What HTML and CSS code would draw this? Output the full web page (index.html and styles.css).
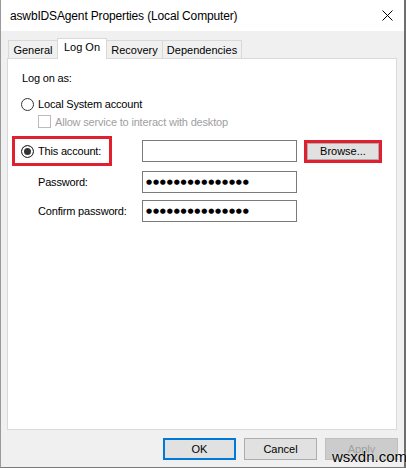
FILE: index.html
```html
<!DOCTYPE html>
<html lang="en">
<head>
  <meta charset="UTF-8" />
  <meta name="viewport" content="width=device-width, initial-scale=1.0"/>
  <title>aswbIDSAgent Properties (Local Computer)</title>
  <link rel="stylesheet" href="styles.css">
</head>
<body>
  <div class="window">
    <div class="titlebar">
      <span class="title">aswbIDSAgent Properties (Local Computer)</span>
      <svg class="close" width="11" height="11" viewBox="0 0 11 11">
        <path d="M0.5 0.5 L10.5 10.5 M10.5 0.5 L0.5 10.5" stroke="#000" stroke-width="1" fill="none"/>
      </svg>
    </div>

    <div class="tabs">
      <div class="tab w-general">General</div>
      <div class="tab active w-logon">Log On</div>
      <div class="tab w-recovery">Recovery</div>
      <div class="tab w-deps">Dependencies</div>
    </div>

    <div class="panel">
      <div class="caption">Log on as:</div>

      <div class="row option">
        <span class="radio"></span>
        <span>Local System account</span>
      </div>
      <div class="row sub disabled">
        <span class="check"></span>
        <span>Allow service to interact with desktop</span>
      </div>

      <div class="row account">
        <div class="account-label">
          <span class="radio on"></span>
          <span>This account:</span>
        </div>
        <div class="field"></div>
        <button class="btn browse">Browse...</button>
      </div>
      <div class="row pass">
        <span class="label">Password:</span>
        <div class="field"><span class="dots">●●●●●●●●●●●●●●●</span></div>
      </div>
      <div class="row pass confirm">
        <span class="label">Confirm password:</span>
        <div class="field"><span class="dots">●●●●●●●●●●●●●●●</span></div>
      </div>
    </div>

    <div class="footer">
      <button class="btn default">OK</button>
      <button class="btn">Cancel</button>
      <button class="btn off">Apply</button>
    </div>

    <span class="watermark">wsxdn.com</span>
  </div>
</body>
</html>
```

FILE: styles.css
```css
body {
  margin: 0;
  font-family: 'Liberation Sans', Arial, sans-serif;
  font-size: 11px;
  color: #000;
  background: #fff;
}
.window {
  position: relative;
  width: 406px;
  height: 468px;
  box-sizing: border-box;
  background: #f0f0f0;
  border-left: 1px solid #9a9a9a;
  border-right: 2px solid #6e6e6e;
  border-bottom: 1px solid #7a7a7a;
  display: flex;
  flex-direction: column;
}
.titlebar {
  height: 31px;
  flex: none;
  background: #fff;
  display: flex;
  align-items: center;
  justify-content: space-between;
  padding: 0 11px 0 9px;
}
.title {
  font-size: 12px;
  letter-spacing: -0.15px;
}
.close {
  display: block;
}

/* tabs */
.tabs {
  display: flex;
  align-items: flex-end;
  height: 20px;
  margin: 7px 0 0 7px;
  flex: none;
}
.tab {
  box-sizing: border-box;
  height: 18px;
  border: 1px solid #d9d9d9;
  border-bottom: none;
  margin-right: -1px;
  text-align: center;
  line-height: 18px;
  background: #f0f0f0;
}
.tab.active {
  position: relative;
  z-index: 1;
  height: 21px;
  margin-bottom: -1px;
  background: #fff;
  line-height: 16px;
}
.w-general { width: 50px; }
.w-logon { width: 50px; }
.w-recovery { width: 57px; }
.w-deps { width: 80px; }

/* panel */
.panel {
  height: 372px;
  box-sizing: border-box;
  margin: 0 7px 0 6px;
  background: #fff;
  border: 1px solid #d9d9d9;
  padding: 12px 0 0 7px;
  flex: none;
  letter-spacing: -0.18px;
}
.caption {
  line-height: 15px;
  padding-left: 7px;
}
.row {
  display: flex;
  align-items: center;
}
.option {
  height: 16px;
  margin-top: 10px;
  padding-left: 6px;
  gap: 4px;
}
.sub {
  height: 15px;
  margin-top: 2px;
  padding-left: 23px;
  gap: 4px;
}
.disabled {
  color: #a0a0a0;
}
.radio {
  width: 13px;
  height: 13px;
  box-sizing: border-box;
  border: 1px solid #333;
  border-radius: 50%;
  background: #fff;
  flex: none;
}
.radio.on {
  background: #333;
  box-shadow: inset 0 0 0 2px #fff;
}
.check {
  width: 13px;
  height: 13px;
  box-sizing: border-box;
  border: 1px solid #bcbcbc;
  background: #fff;
  flex: none;
}
.account {
  height: 24px;
  margin-top: 10px;
}
.account-label {
  box-sizing: border-box;
  width: 94px;
  height: 24px;
  padding-left: 6px;
  display: flex;
  align-items: center;
  gap: 4px;
  outline: 3px solid #e0202e;
}
.field {
  box-sizing: border-box;
  width: 155px;
  height: 22px;
  border: 1px solid #7a7a7a;
  background: #fff;
  display: flex;
  align-items: center;
  padding-left: 3px;
}
.account .field {
  margin-left: 33px;
}
.dots {
  font-family: 'DejaVu Sans', sans-serif;
  font-size: 7px;
  letter-spacing: 0.8px;
  line-height: 10px;
}
.pass {
  height: 22px;
  margin-top: 8px;
  padding-left: 23px;
}
.confirm {
  margin-top: 7px;
}
.label {
  width: 104px;
}

/* buttons */
.btn {
  box-sizing: border-box;
  width: 73px;
  height: 22px;
  padding: 0;
  font-family: inherit;
  font-size: 11px;
  color: #000;
  background: #e1e1e1;
  border: 1px solid #adadad;
}
.browse {
  width: 78px;
  height: 23px;
  margin-left: 7px;
  border: 3px solid #e0202e;
  box-shadow: inset 0 0 0 1px #adadad;
}
.default {
  border: 1px solid #0078d7;
  box-shadow: inset 0 0 0 1px #0078d7;
}
.off {
  background: #cccccc;
  border-color: #bfbfbf;
  color: #a0a0a0;
}
.footer {
  display: flex;
  justify-content: flex-end;
  gap: 8px;
  margin-top: 8px;
  padding-right: 6px;
}
.watermark {
  position: absolute;
  left: 331px;
  top: 449px;
  font-family: 'Liberation Sans Narrow', 'Liberation Sans', sans-serif;
  font-size: 15px;
  line-height: 16px;
  color: #000;
  text-shadow: 0 0 2px #fff;
}
```
